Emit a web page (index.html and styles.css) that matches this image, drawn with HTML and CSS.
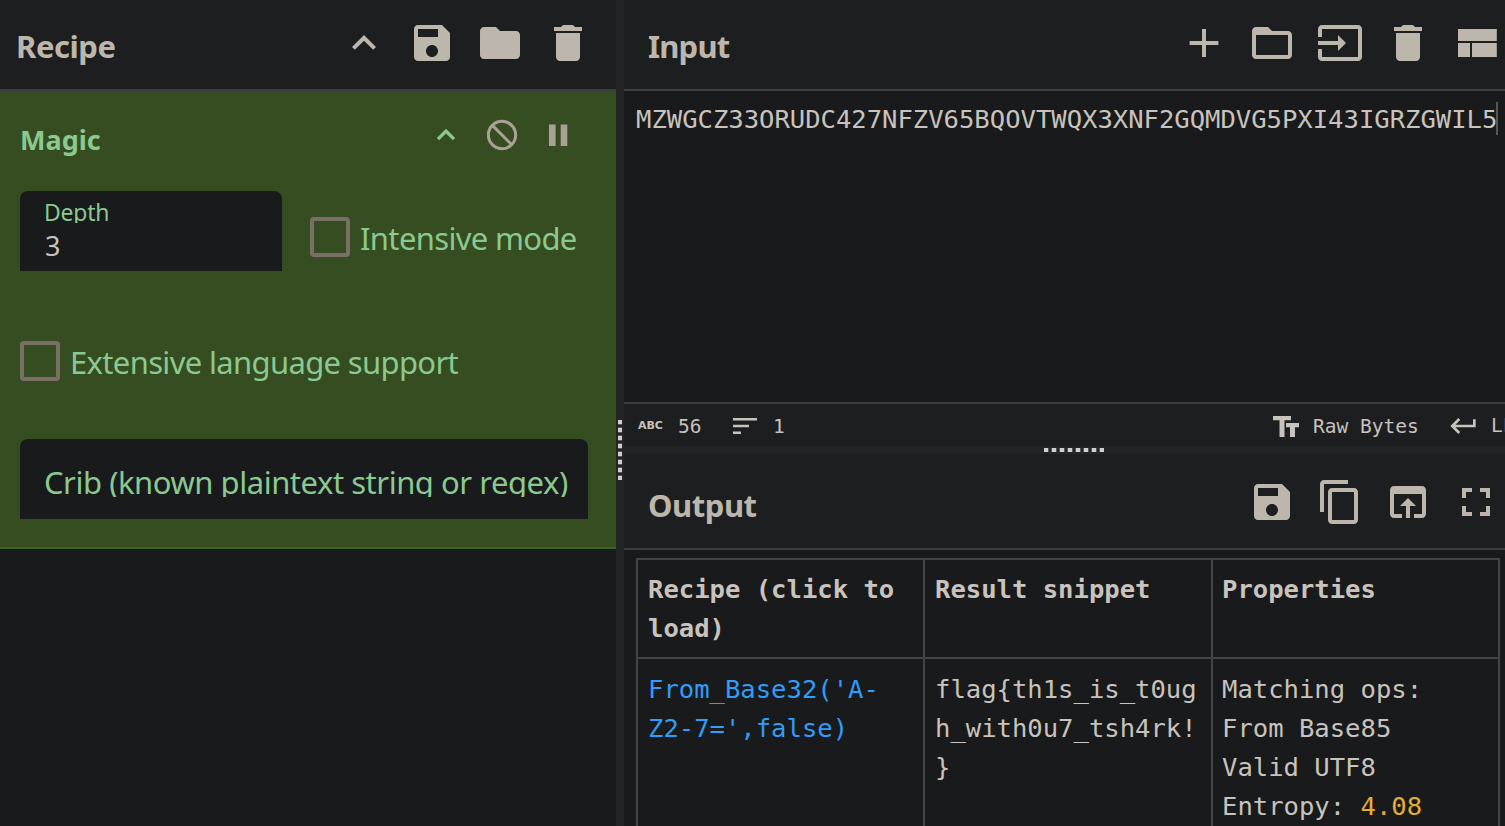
FILE: index.html
```html
<!DOCTYPE html>
<html lang="en">
<head>
<meta charset="utf-8">
<title>Recipe</title>
<link rel="stylesheet" href="styles.css">
</head>
<body>
<main class="workspace">
  <section class="recipe">
    <header class="bar">
      <h2 class="title t-recipe">Recipe</h2>
      <div class="icons">
        <svg viewBox="0 0 24 24"><path d="M12 8l-6 6 1.41 1.41L12 10.83l4.59 4.58L18 14z"/></svg>
        <svg viewBox="0 0 24 24"><path d="M17 3H5c-1.11 0-2 .9-2 2v14c0 1.1.89 2 2 2h14c1.1 0 2-.9 2-2V7l-4-4zm-5 16c-1.66 0-3-1.34-3-3s1.34-3 3-3 3 1.34 3 3-1.34 3-3 3zm3-10H5V5h10v4z"/></svg>
        <svg viewBox="0 0 24 24"><path d="M10 4H4c-1.1 0-1.99.9-1.99 2L2 18c0 1.1.9 2 2 2h16c1.1 0 2-.9 2-2V8c0-1.1-.9-2-2-2h-8l-2-2z"/></svg>
        <svg viewBox="0 0 24 24"><path d="M6 19c0 1.1.9 2 2 2h8c1.1 0 2-.9 2-2V7H6v12zM19 4h-3.5l-1-1h-5l-1 1H5v2h14V4z"/></svg>
      </div>
    </header>
    <article class="operation">
      <div class="op-head">
        <h3 class="op-name">Magic</h3>
        <div class="op-icons">
          <svg class="fold" viewBox="0 0 24 24"><path d="M12 8l-6 6 1.41 1.41L12 10.83l4.59 4.58L18 14z" stroke="currentColor" stroke-width=".3"/></svg>
          <svg viewBox="0 0 24 24"><circle cx="12" cy="12" r="9.1" fill="none" stroke="currentColor" stroke-width="2"/><path d="M5.6 5.6l12.8 12.8" stroke="currentColor" stroke-width="2"/></svg>
          <svg viewBox="0 0 24 24"><path d="M6 5h4.4v14.3H6zM13.8 5h4.4v14.3h-4.4z"/></svg>
        </div>
      </div>
      <div class="row first">
        <div class="field depth">
          <label class="small-label">Depth</label>
          <span class="value">3</span>
        </div>
        <label class="check"><i class="box"></i><span class="t-intensive">Intensive mode</span></label>
      </div>
      <div class="row second">
        <label class="check"><i class="box"></i><span class="t-extensive">Extensive language support</span></label>
      </div>
      <div class="field crib"><span class="placeholder">Crib (known plaintext string or regex)</span></div>
    </article>
  </section>

  <div class="gutter-v"><i class="grip-v"></i></div>

  <div class="io">
    <section class="input">
      <header class="bar">
        <h2 class="title t-input">Input</h2>
        <div class="icons">
          <svg viewBox="0 0 24 24"><path d="M19.2 13H13v6h-2v-6H4.800v-2H11V5h2v6h6.200z"/></svg>
          <svg viewBox="0 0 24 24"><path d="M20 6h-8l-2-2H4c-1.1 0-1.99.9-1.99 2L2 18c0 1.1.9 2 2 2h16c1.1 0 2-.9 2-2V8c0-1.1-.9-2-2-2zm0 12H4V8h16v10z"/></svg>
          <svg viewBox="0 0 24 24"><path d="M21 3.010H3c-1.1 0-2 .9-2 2V9h2V4.990h18v14.030H3V15H1v4.010c0 1.1.9 1.980 2 1.980h18c1.1 0 2-.88 2-1.980v-14c0-1.110-.9-2-2-2zM11 16l4-4-4-4v3H1v2h10v3z"/></svg>
          <svg viewBox="0 0 24 24"><path d="M6 19c0 1.1.9 2 2 2h8c1.1 0 2-.9 2-2V7H6v12zM19 4h-3.5l-1-1h-5l-1 1H5v2h14V4z"/></svg>
          <svg viewBox="0 0 24 24"><path d="M3 19h6v-7H3v7zm7 0h12.400v-7H10v7zM3 5v6h19.400V5H3z"/></svg>
        </div>
      </header>
      <div class="editor"><span class="code">MZWGCZ33ORUDC427NFZV65BQOVTWQX3XNF2GQMDVG5PXI43IGRZGWIL5</span><i class="caret"></i></div>
      <footer class="status">
        <span class="abc">ABC</span>
        <span class="count">56</span>
        <svg class="sort" viewBox="0 0 24 16"><path d="M0 0h24v2.600H0zM0 6.700h16v2.600H0zM0 13.400h8V16H0z"/></svg>
        <span class="lines">1</span>
        <svg class="size" viewBox="0 0 26 21"><path d="M0 0h18v4.200h-6.500V21h-5V4.200H0zM13 7h13v4.200h-4V21h-5v-9.800h-4z"/></svg>
        <span class="encoding">Raw Bytes</span>
        <svg class="enter" viewBox="2 6 19 12"><path d="M19 7v4H5.830l3.580-3.590L8 6l-6 6 6 6 1.410-1.410L5.830 13H21V7z"/></svg>
        <span class="eol">LF</span>
      </footer>
    </section>

    <div class="gutter-h"><i class="grip-h"></i></div>

    <section class="output">
      <header class="bar out-bar">
        <h2 class="title t-output">Output</h2>
        <div class="icons">
          <svg viewBox="0 0 24 24"><path d="M17 3H5c-1.11 0-2 .9-2 2v14c0 1.1.89 2 2 2h14c1.1 0 2-.9 2-2V7l-4-4zm-5 16c-1.66 0-3-1.34-3-3s1.34-3 3-3 3 1.34 3 3-1.34 3-3 3zm3-10H5V5h10v4z"/></svg>
          <svg viewBox="0 0 24 24"><path d="M16 1H4c-1.1 0-2 .9-2 2v14h2V3h12V1zm3 4H8c-1.1 0-2 .9-2 2v14c0 1.1.9 2 2 2h11c1.1 0 2-.9 2-2V7c0-1.1-.9-2-2-2zm0 16H8V7h11v14z"/></svg>
          <svg viewBox="0 0 24 24"><path d="M19 4H5c-1.11 0-2 .9-2 2v12c0 1.1.89 2 2 2h4v-2H5V8h14v10h-4v2h4c1.1 0 2-.9 2-2V6c0-1.1-.89-2-2-2zm-7 6l-4 4h3v6h2v-6h3l-4-4z"/></svg>
          <svg viewBox="0 0 24 24"><path d="M7 14H5v5h5v-2H7v-3zm-2-4h2V7h3V5H5v5zm12 7h-3v2h5v-5h-2v3zM14 5v2h3v3h2V5h-5z"/></svg>
        </div>
      </header>
      <div class="results">
        <div class="cell head">Recipe (click to<br>load)</div>
        <div class="cell head">Result snippet</div>
        <div class="cell head last">Properties</div>
        <div class="cell link">From_Base32('A-<br>Z2-7=',false)</div>
        <div class="cell">flag{th1s_is_t0ug<br>h_with0u7_tsh4rk!<br>}</div>
        <div class="cell last">Matching ops:<br>From Base85<br>Valid UTF8<br>Entropy: <span class="entropy">4.08</span></div>
      </div>
    </section>
  </div>
</main>
</body>
</html>
```
FILE: styles.css
```css
* { box-sizing: border-box; }
html, body { height: 100%; }
body {
  margin: 0;
  overflow: hidden;
  background: #191a1c;
  color: #bdb6ac;
  font-family: "Noto Sans", "Open Sans", sans-serif;
}
h2, h3 { margin: 0; }
svg { display: block; flex: none; fill: currentColor; }
span, h2, h3, .cell { white-space: pre; }

.workspace { display: grid; grid-template-columns: 616px 8px 881px; height: 826px; overflow: hidden; }

/* Panel title bars */
.bar {
  display: flex;
  align-items: center;
  justify-content: space-between;
  height: 91px;
  padding: 0 5px 0 24px;
  background: #1d1e20;
  border-bottom: 2px solid #3d3e40;
}
.recipe .bar { padding: 0 24px 0 16px; }
.title { margin-top: 3px; font-size: 31px; line-height: 40px; font-weight: 700; letter-spacing: -0.45px; }
.t-input { letter-spacing: -0.8px; }
.icons { display: flex; gap: 20px; margin-bottom: 3px; }
.icons svg { width: 48px; height: 48px; }

/* Operation card */
.operation {
  height: 458px;
  padding: 0 28px 0 20px;
  background: #354d20;
  border-bottom: 2px solid #3c6427;
  color: #8ac990;
}
.op-head { display: flex; justify-content: space-between; height: 100px; }
.op-name { padding-top: 29px; font-size: 27px; line-height: 40px; font-weight: 700; }
.op-icons { display: flex; gap: 20px; padding: 26px 12px 0 0; color: #aaa196; }
.op-icons svg { width: 36px; height: 36px; }
.op-icons .fold { color: #8ac990; }
.row { display: flex; gap: 28px; }
.first { height: 80px; }
.second { margin-top: 70px; height: 40px; }
.field { background: #191a1c; border-radius: 8px 8px 0 0; height: 80px; padding-left: 24px; }
.depth { width: 262px; }
.small-label { display: block; height: 32px; overflow: hidden; font-size: 23px; line-height: 42px; letter-spacing: -0.25px; }
.value { display: block; padding-left: 1px; font-size: 27px; line-height: 46px; color: #c8c3bc; }
.check { display: flex; height: 40px; font-size: 31px; line-height: 42px; }
.first .check { margin-top: 26px; }
.box { width: 40px; height: 40px; margin-right: 10px; border: 4px solid #796f65; border-radius: 4px; }
.t-intensive, .t-extensive { letter-spacing: -0.66px; }
.crib { margin-top: 58px; }
.placeholder { display: block; height: 58px; overflow: hidden; font-size: 31px; line-height: 86px; letter-spacing: -0.47px; }

/* Splitters */
.gutter-v { display: flex; align-items: center; justify-content: center; background: #232426; padding-top: 74px; }
.grip-v { width: 4px; height: 60px; background: repeating-linear-gradient(#d0d0d0 0 4px, #57585a 4px 5px, #232426 5px 7px, #57585a 7px 8px); }
.gutter-h { display: flex; justify-content: center; padding: 2px 0; height: 8px; background: #232426; padding-right: 1px; }
.grip-h { width: 60px; height: 4px; margin-left: 20px; background: repeating-linear-gradient(90deg, #d0d0d0 0 4px, #57585a 4px 5px, #232426 5px 7px, #57585a 7px 8px); }

/* Input */
.io { overflow: hidden; }
.editor {
  display: flex;
  height: 311px;
  padding: 9px 0 0 12px;
  font: 25.55px/38px "DejaVu Sans Mono", monospace;
  color: #c8c3bc;
}
.caret { width: 2px; height: 33px; margin: 2px 0 0 -1px; background: #55585b; }
.status {
  display: flex;
  align-items: center;
  height: 44px;
  padding: 2px 0 0 14px;
  overflow: hidden;
  background: #1d1e20;
  border-top: 2px solid #3d3e40;
  color: #c8c3bc;
  font: 19.5px/40px "DejaVu Sans Mono", monospace;
}
.status > * { flex: none; }
.abc { width: 40px; font: 700 11px/20px "DejaVu Sans", sans-serif; letter-spacing: -0.1px; }
.count { width: 55px; padding-top: 1px; }
.sort { width: 24px; height: 16px; margin-right: 16px; }
.lines { width: 500px; padding-top: 1px; }
.size { width: 26px; height: 21px; margin-right: 14px; }
.encoding { width: 137px; padding-top: 1px; }
.enter { width: 26px; height: 16px; margin-right: 15px; }

/* Output */
.out-bar { height: 96px; }
.out-bar .title { margin-top: 8px; }
.out-bar .icons { margin: 2px 0 0; }
.results {
  display: grid;
  grid-template-columns: 287px 288px 289px;
  grid-template-rows: 99px 300px;
  width: 864px;
  margin: 8px 0 0 12px;
  border: solid #3e4646;
  border-width: 0 2px 0 0;
  font: 25.57px/39px "DejaVu Sans Mono", monospace;
  color: #c8c3bc;
}
.cell { padding: 11px 0 0 10px; border: solid #3e4646; border-width: 2px 0 0 2px; }
.head { padding-top: 10px; font-weight: 700; }
.last { padding-left: 9px; }
.link { color: #2f9dfa; }
.entropy { color: #e6ad33; }
```
